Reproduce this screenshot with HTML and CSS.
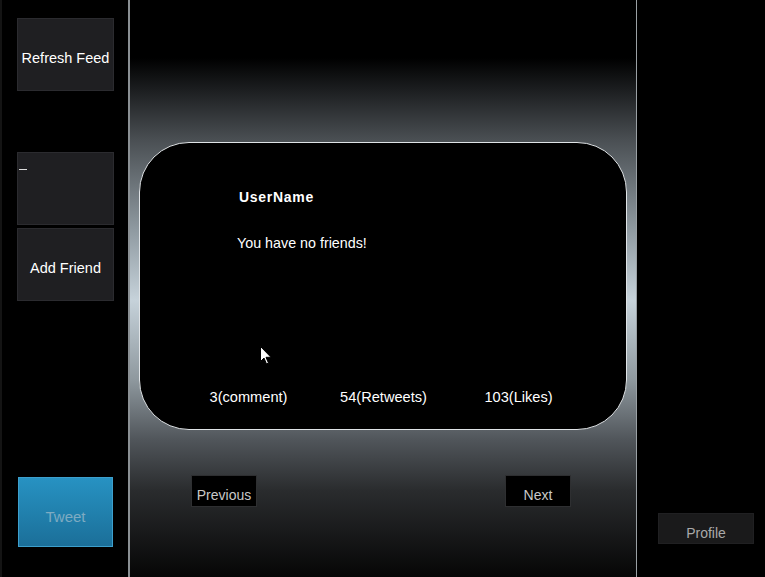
FILE: index.html
```html
<!DOCTYPE html>
<html>
<head>
<meta charset="utf-8">
<link rel="stylesheet" href="styles.css">
</head>
<body>
<div class="app">
  <aside class="sidebar">
    <button class="side-btn refresh">Refresh Feed</button>
    <div class="side-input"><span class="caret"></span></div>
    <button class="side-btn">Add Friend</button>
    <button class="tweet-btn">Tweet</button>
  </aside>
  <main class="feed">
    <section class="card">
      <div class="user">UserName</div>
      <div class="msg">You have no friends!</div>
      <div class="stats">
        <span>3(comment)</span>
        <span>54(Retweets)</span>
        <span>103(Likes)</span>
      </div>
      <svg class="cursor" width="12" height="19" viewBox="0 0 12 19"><path d="M0.5 0.5 L0.5 15.5 L4 12 L6.5 18 L8.5 17 L6 11.3 L11 11.3 Z" fill="#fff" stroke="#000" stroke-width="1"/></svg>
    </section>
    <nav class="pager">
      <button class="page-btn">Previous</button>
      <button class="page-btn next">Next</button>
    </nav>
  </main>
  <aside class="right">
    <button class="profile-btn">Profile</button>
  </aside>
</div>
</body>
</html>
```
FILE: styles.css
```css
* { box-sizing: border-box; }
html, body { margin: 0; padding: 0; background: #000; }
body { width: 765px; height: 577px; overflow: hidden; font-family: "Liberation Sans", Arial, sans-serif; font-size: 14px; }
button { font-family: inherit; font-size: 14px; cursor: default; padding: 0; }

.app { display: flex; height: 577px; }

.sidebar {
  width: 128px;
  flex: none;
  display: flex;
  flex-direction: column;
  padding: 18px 0 30px 15px;
  border-left: 2px solid #141414;
}
.side-btn {
  width: 97px; height: 73px;
  background: #1f1f22;
  border: 1px solid #2b2b2f;
  color: #fff;
  font-size: 14.5px;
  padding-top: 7px;
}
.refresh { margin-bottom: 61px; }
.side-input {
  width: 97px; height: 73px;
  background: #1f1f22;
  border: 1px solid #2b2b2f;
  margin-bottom: 3px;
  position: relative;
}
.caret { display: block; width: 8px; height: 1px; background: #ddd; margin: 16px 0 0 1px; }
.tweet-btn {
  margin-top: auto;
  margin-left: 1px;
  width: 95px; height: 70px;
  background: linear-gradient(#2792c2, #1b6f99);
  border: 1px solid #3d9fcc;
  color: #7eabc2;
  font-size: 15px;
  padding-top: 8px;
}

.feed {
  width: 509px;
  flex: none;
  border-left: 2px solid #8a8f93;
  border-right: 1px solid #9aa0a4;
  background: linear-gradient(#000 0px, #000 58px, #1c1e20 90px, #4a4f53 140px, #8f9aa1 230px, #c6d2da 300px, #8e989e 380px, #50555a 440px, #2a2c2e 490px, #060606 577px);
  padding: 142px 9px 0 9px;
  display: flex;
  flex-direction: column;
}
.card {
  position: relative;
  height: 288px;
  background: #000;
  border: 1px solid #dfe3e6;
  border-radius: 50px;
  color: #fff;
  padding: 45px 0 0 98px;
}
.user { font-weight: bold; letter-spacing: 0.7px; line-height: 18px; margin-left: 1px; }
.msg { margin-top: 28px; line-height: 18px; margin-left: -1px; font-size: 14.3px; }
.stats {
  position: absolute;
  left: 0; right: 0; bottom: 23px;
  display: grid;
  grid-template-columns: 135px 135px 135px;
  justify-content: center;
  text-align: center;
  line-height: 18px;
  padding-left: 1px;
  font-size: 14.6px;
}
.cursor { position: absolute; left: 120px; top: 203px; }

.pager {
  display: flex;
  justify-content: space-between;
  padding: 45px 56px 0 52px;
}
.page-btn {
  width: 66px; height: 32px;
  background: #000;
  border: 1px solid #2e2f31;
  color: #c9c9c9;
  padding-top: 8px;
}
.next { width: 66px; }

.right {
  flex: 1;
  display: flex;
  align-items: flex-end;
  padding: 0 0 33px 21px;
}
.profile-btn {
  width: 96px; height: 31px;
  background: #1a1a1b;
  border: 1px solid #202022;
  color: #a9a9a9;
  padding-top: 8px;
}
```
